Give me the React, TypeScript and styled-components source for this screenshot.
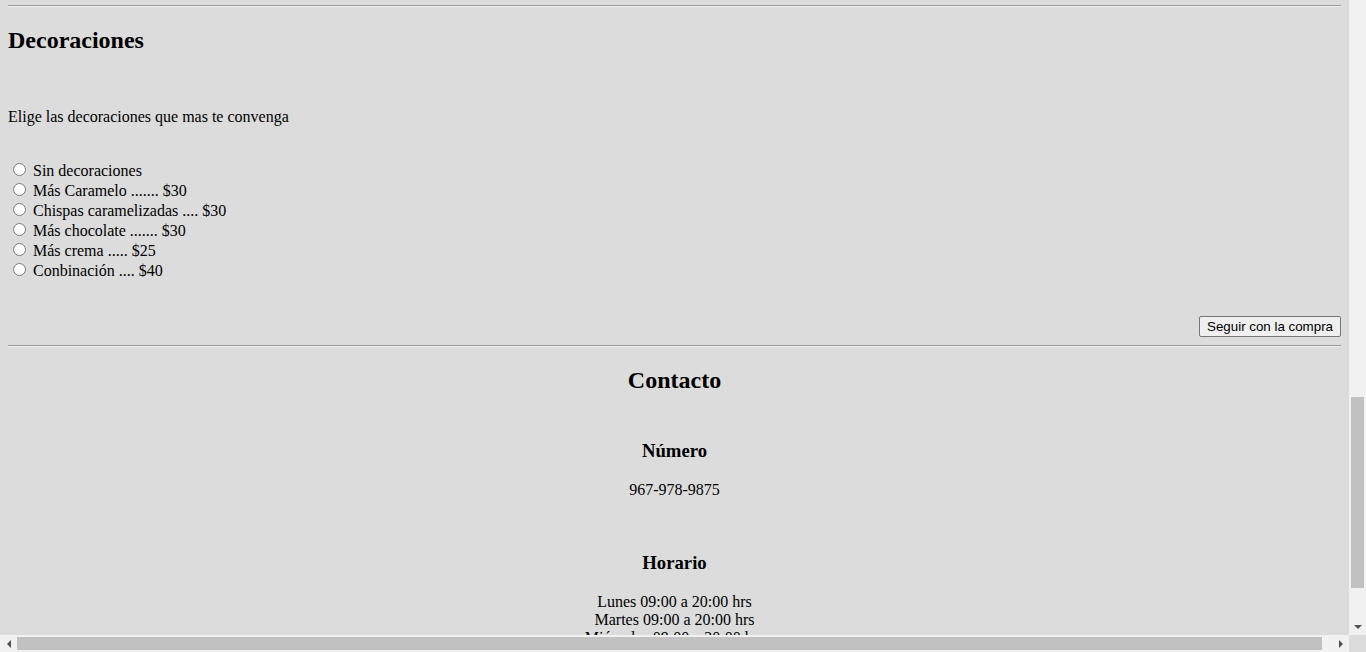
import React from "react";
import styled, { createGlobalStyle } from "styled-components";

const Global = createGlobalStyle`
  html, body { margin: 0; padding: 0; height: 100%; overflow: hidden; }
  #root { height: 100%; }
`;

const Frame = styled.div`
  display: grid;
  grid-template-columns: 1fr 17px;
  grid-template-rows: 1fr 17px;
  width: 100vw;
  height: 100vh;
  background: #dcdcdc;
`;

const Viewport = styled.div`
  overflow: hidden;
  padding: 0 8px;
  font-family: "Liberation Serif", "Times New Roman", serif;
  font-size: 16px;
  color: #000;
`;

const Rule = styled.hr<{ $top: number }>`
  margin: ${(p) => p.$top}px 0 0;
  height: 0;
  border: none;
  border-top: 1px solid #9a9a9a;
  border-bottom: 1px solid #eeeeee;
`;

const Heading = styled.h2<{ $top: number; $center?: boolean }>`
  margin: ${(p) => p.$top}px 0 0;
  font-size: 24px;
  line-height: 28px;
  font-weight: bold;
  text-align: ${(p) => (p.$center ? "center" : "left")};
`;

const SubHeading = styled.h3<{ $top: number }>`
  margin: ${(p) => p.$top}px 0 0;
  font-size: 18.72px;
  line-height: 21px;
  font-weight: bold;
  text-align: center;
`;

const Text = styled.p<{ $top: number; $center?: boolean }>`
  margin: ${(p) => p.$top}px 0 0;
  line-height: 18px;
  text-align: ${(p) => (p.$center ? "center" : "left")};
`;

const OptionList = styled.div`
  margin-top: 35px;
  display: flex;
  flex-direction: column;
`;

const Option = styled.label`
  display: flex;
  align-items: center;
  height: 20px;
  line-height: 18px;
`;

const Radio = styled.input`
  width: 13px;
  height: 13px;
  margin: 0 7px 0 5px;
  position: relative;
  top: -2px;
`;

const ButtonRow = styled.div`
  margin-top: 35px;
  display: flex;
  justify-content: flex-end;
`;

const Button = styled.button`
  height: 21px;
  padding: 0 7px;
  font-family: "Liberation Sans", Arial, sans-serif;
  font-size: 13.33px;
  color: #000;
  background: #efefef;
  border: 1px solid #767676;
  border-radius: 2px;
`;

const Hours = styled.div`
  margin-top: 20px;
  text-align: center;
  line-height: 18px;
`;

const VTrack = styled.div`
  background: #f1f1f1;
  display: flex;
  flex-direction: column;
  padding-top: 397px;
`;

const VThumb = styled.div`
  height: 191px;
  margin: 0 2px;
  background: #c1c1c1;
`;

const Spacer = styled.div`
  flex: 1;
`;

const ArrowBox = styled.div`
  width: 17px;
  height: 17px;
  display: flex;
  align-items: center;
  justify-content: center;
  flex-shrink: 0;
`;

const HTrack = styled.div`
  background: #f1f1f1;
  display: flex;
  align-items: stretch;
`;

const HThumb = styled.div`
  flex: 1;
  margin: 2px 10px 2px 0;
  background: #c1c1c1;
`;

const Corner = styled.div`
  background: #dcdcdc;
`;

const Arrow = ({ dir }: { dir: "down" | "left" | "right" }) => {
  const pts =
    dir === "down" ? "0,0 8,0 4,4" : dir === "left" ? "4,0 4,8 0,4" : "0,0 0,8 4,4";
  const w = dir === "down" ? 8 : 4;
  const h = dir === "down" ? 4 : 8;
  return (
    <svg width={w} height={h} viewBox={`0 0 ${w} ${h}`}>
      <polygon points={pts} fill="#505050" />
    </svg>
  );
};

const options = [
  "Sin decoraciones",
  "Más Caramelo ....... $30",
  "Chispas caramelizadas .... $30",
  "Más chocolate ....... $30",
  "Más crema ..... $25",
  "Conbinación .... $40",
];

export default function App() {
  return (
    <>
      <Global />
      <Frame>
        <Viewport>
          <Rule $top={5} />
          <Heading $top={19}>Decoraciones</Heading>
          <Text $top={54}>Elige las decoraciones que mas te convenga</Text>
          <OptionList>
            {options.map((o) => (
              <Option key={o}>
                <Radio type="radio" name="decoracion" />
                {o}
              </Option>
            ))}
          </OptionList>
          <ButtonRow>
            <Button>Seguir con la compra</Button>
          </ButtonRow>
          <Rule $top={8} />
          <Heading $top={19} $center>
            Contacto
          </Heading>
          <SubHeading $top={46}>Número</SubHeading>
          <Text $top={20} $center>
            967-978-9875
          </Text>
          <SubHeading $top={53}>Horario</SubHeading>
          <Hours>
            <div>Lunes 09:00 a 20:00 hrs</div>
            <div>Martes 09:00 a 20:00 hrs</div>
            <div>Miércoles 09:00 a 20:00 hrs</div>
          </Hours>
        </Viewport>
        <VTrack>
          <VThumb />
          <Spacer />
          <ArrowBox>
            <Arrow dir="down" />
          </ArrowBox>
        </VTrack>
        <HTrack>
          <ArrowBox>
            <Arrow dir="left" />
          </ArrowBox>
          <HThumb />
          <ArrowBox>
            <Arrow dir="right" />
          </ArrowBox>
        </HTrack>
        <Corner />
      </Frame>
    </>
  );
}
